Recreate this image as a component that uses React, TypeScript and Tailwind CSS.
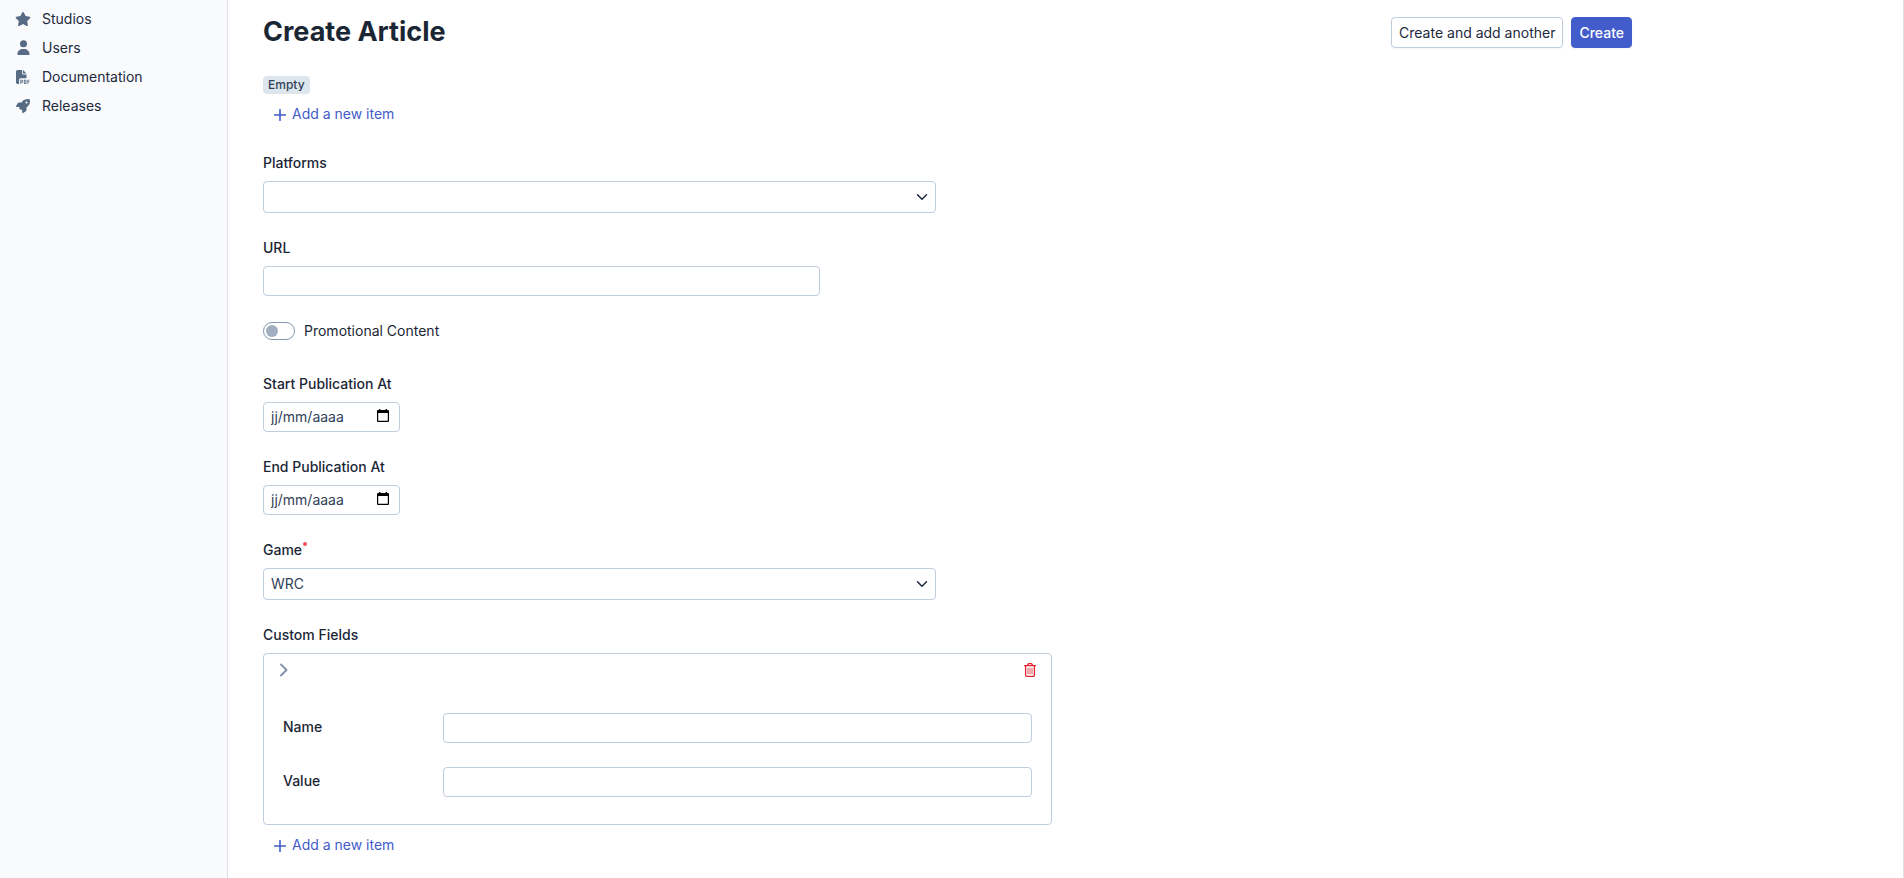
import { ReactNode, useState } from "react";
import { FaFilePdf, FaRocket, FaStar } from "react-icons/fa6";

function UserIcon({ className }: { className?: string }) {
  return (
    <svg viewBox="0 0 448 512" className={className} fill="currentColor">
      <path d="M224 248a120 120 0 1 0 0-240 120 120 0 1 0 0 240zm-29.7 56C95.8 304 16 383.8 16 482.3 16 498.7 29.3 512 45.7 512l356.6 0c16.4 0 29.7-13.3 29.7-29.7 0-98.5-79.8-178.3-178.3-178.3l-59.4 0z" />
    </svg>
  );
}

const menuItems = [
  { label: "Studios", icon: FaStar, size: "size-4" },
  { label: "Users", icon: UserIcon, size: "size-[15px]" },
  { label: "Documentation", icon: FaFilePdf, size: "size-[14px]" },
  { label: "Releases", icon: FaRocket, size: "size-[14px]" },
];

const controlClass =
  "block w-full rounded border border-[#c1cddc] bg-white px-[7px] text-slate-700 outline-none focus:border-indigo-500";

function Sidebar() {
  return (
    <aside className="w-[228px] shrink-0 border-r border-[#dde2e8] bg-slate-50 pt-1">
      <nav className="flex flex-col">
        {menuItems.map(({ label, icon: Icon, size }) => (
          <a
            key={label}
            href="#"
            className="flex h-[29px] items-center gap-[11px] pl-[15px] text-slate-800"
          >
            <span className="flex w-4 justify-center text-[#576b85]">
              <Icon className={size} />
            </span>
            {label}
          </a>
        ))}
      </nav>
    </aside>
  );
}

function Label({ id, children }: { id?: string; children: ReactNode }) {
  return (
    <label htmlFor={id} className="mb-2 block w-fit font-medium text-[#1b2635]">
      {children}
    </label>
  );
}

function SelectField({
  id,
  label,
  options,
  required,
}: {
  id: string;
  label: string;
  options: string[];
  required?: boolean;
}) {
  return (
    <div className="max-w-[673px]">
      <Label id={id}>
        <span className="flex">
          {label}
          {required && (
            <span className="mt-0.5 ml-px size-1 rounded-full bg-[#f0525a]" />
          )}
        </span>
      </Label>
      <div className="relative">
        <select id={id} className={`${controlClass} h-8 appearance-none`}>
          {options.map((option) => (
            <option key={option}>{option}</option>
          ))}
        </select>
        <svg
          viewBox="0 0 16 16"
          className="pointer-events-none absolute top-[10px] right-2 size-3 text-slate-800"
          fill="none"
          stroke="currentColor"
          strokeWidth="2"
          strokeLinecap="round"
          strokeLinejoin="round"
        >
          <path d="m2 5 6 6 6-6" />
        </svg>
      </div>
    </div>
  );
}

function DateField({ id, label }: { id: string; label: string }) {
  return (
    <div>
      <Label id={id}>{label}</Label>
      <div className="flex h-[30px] w-[137px] items-center rounded border border-[#c1cddc] bg-white pr-2.5 pl-[7px]">
        <input
          id={id}
          type="text"
          placeholder="jj/mm/aaaa"
          className="w-full min-w-0 text-slate-700 outline-none placeholder:text-slate-700"
        />
        <button type="button" aria-label="Open calendar">
          <svg viewBox="0 0 12 13" className="mb-[3px] h-[13px] w-3" fill="#000">
            <path d="M2 0h1.4v1h5.2V0H10v1h1a1 1 0 0 1 1 1v10a1 1 0 0 1-1 1H1a1 1 0 0 1-1-1V2a1 1 0 0 1 1-1h1zM1.2 4v7.8h9.6V4z" />
          </svg>
        </button>
      </div>
    </div>
  );
}

function AddItemButton({ onClick }: { onClick?: () => void }) {
  return (
    <button
      type="button"
      onClick={onClick}
      className="mt-2.5 ml-[11px] flex items-center gap-1.5 text-[#435ccb]"
    >
      <svg
        viewBox="0 0 12 12"
        className="mt-0.5 size-3"
        stroke="currentColor"
        strokeWidth="1.6"
        strokeLinecap="round"
      >
        <path d="M6 .7v10.6M.7 6h10.6" />
      </svg>
      Add a new item
    </button>
  );
}

function CustomField({ onDelete }: { onDelete: () => void }) {
  return (
    <div className="rounded border border-[#c1cddc] px-[19px] pb-[27px]">
      <div className="-mx-1 flex h-8 items-center justify-between">
        <button type="button" aria-label="Expand">
          <svg
            viewBox="0 0 10 14"
            className="h-[14px] w-2.5 text-[#7d8fab]"
            fill="none"
            stroke="currentColor"
            strokeWidth="1.8"
            strokeLinecap="round"
            strokeLinejoin="round"
          >
            <path d="m2 1.5 5.5 5.5L2 12.5" />
          </svg>
        </button>
        <button type="button" aria-label="Remove item" onClick={onDelete}>
          <svg
            viewBox="0 0 12 14"
            className="h-[14px] w-3 text-[#e5242f]"
            fill="none"
            stroke="currentColor"
            strokeLinecap="round"
            strokeLinejoin="round"
          >
            <path
              strokeWidth="1.3"
              d="M.6 2.6h10.8M3.4 2.4l.7-1.3q.3-.5.8-.5h2.2q.5 0 .8.5l.7 1.3M1.6 2.8v9.1q0 1.5 1.5 1.5h5.8q1.5 0 1.5-1.5V2.8"
            />
            <path strokeWidth=".8" d="M4 5.2v5.6M6 5.2v5.6M8 5.2v5.6" />
          </svg>
        </button>
      </div>
      <div className="mt-[27px] flex flex-col gap-6">
        {["Name", "Value"].map((name) => (
          <div key={name} className="flex">
            <label
              htmlFor={`custom-${name}`}
              className="w-40 shrink-0 pt-1 font-medium text-[#1b2635]"
            >
              {name}
            </label>
            <input
              id={`custom-${name}`}
              type="text"
              className={`${controlClass} h-[30px]`}
            />
          </div>
        ))}
      </div>
    </div>
  );
}

function App() {
  const [customFields, setCustomFields] = useState([1]);

  return (
    <div className="flex min-h-screen bg-white font-['Inter',sans-serif] text-sm">
      <Sidebar />
      <main className="min-w-0 grow border-r border-[#dde2e8]">
        <form
          className="max-w-[1439px] px-[35px] pt-[17px] pb-5"
          onSubmit={(e) => e.preventDefault()}
        >
          <header className="flex h-[31px] items-center justify-between">
            <h1 className="text-[27px] font-bold text-[#1b2635]">
              Create Article
            </h1>
            <div className="flex gap-2">
              <button
                type="submit"
                className="h-[31px] rounded border border-[#c1cddc] bg-white px-[7px] text-slate-800 shadow-xs"
              >
                Create and add another
              </button>
              <button
                type="submit"
                className="h-[31px] rounded border border-[#435ccb] bg-[#435ccb] px-[7px] font-medium text-white shadow-xs"
              >
                Create
              </button>
            </div>
          </header>

          <div className="mt-7">
            <span className="flex h-[18px] w-fit items-center rounded bg-[#dde5ed] px-[5px] text-xs font-medium text-slate-700">
              Empty
            </span>
            <AddItemButton />
          </div>

          <div className="mt-[29px] flex flex-col gap-[25px]">
            <SelectField id="platforms" label="Platforms" options={[""]} />
            <div className="max-w-[557px]">
              <Label id="url">URL</Label>
              <input
                id="url"
                type="text"
                className={`${controlClass} h-[30px]`}
              />
            </div>
            <div className="mb-2 flex items-center gap-[9px]">
              <input
                id="promotional"
                type="checkbox"
                role="switch"
                className="h-[18px] w-8 appearance-none rounded-full border border-[#8496b0] bg-white before:mt-0.5 before:ml-0.5 before:block before:size-3 before:rounded-full before:bg-[#a0aec0] checked:bg-indigo-100 checked:before:ml-4"
              />
              <label htmlFor="promotional" className="text-[#1b2635]">
                Promotional Content
              </label>
            </div>
            <DateField id="start" label="Start Publication At" />
            <DateField id="end" label="End Publication At" />
            <SelectField id="game" label="Game" options={["WRC"]} required />
            <fieldset className="max-w-[789px] min-w-0">
              <legend className="mb-2 font-medium text-[#1b2635]">
                Custom Fields
              </legend>
              {customFields.map((key) => (
                <CustomField
                  key={key}
                  onDelete={() =>
                    setCustomFields(customFields.filter((k) => k !== key))
                  }
                />
              ))}
              <AddItemButton
                onClick={() => setCustomFields([...customFields, Date.now()])}
              />
            </fieldset>
          </div>
        </form>
      </main>
    </div>
  );
}

export default App;
